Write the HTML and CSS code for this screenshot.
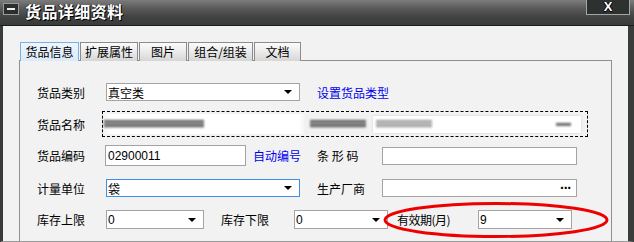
FILE: index.html
```html
<!DOCTYPE html>
<html lang="zh-CN">

<head>
  <meta charset="UTF-8">
  <title>货品详细资料</title>
  <link rel="stylesheet" href="styles.css">
</head>

<body>
  <div class="ventana">
    <div class="titulo">
      <span class="icono-sistema"><span></span></span>
      <span class="titulo-texto">货品详细资料</span>
      <span class="cerrar">X</span>
    </div>

    <div class="cuerpo">
      <div class="pestanas">
        <span class="pestana activa p1">货品信息</span>
        <span class="pestana p2">扩展属性</span>
        <span class="pestana p3">图片</span>
        <span class="pestana p4">组合/组装</span>
        <span class="pestana p5">文档</span>
      </div>

      <div class="panel">
        <div class="fila fila1">
          <span class="etiqueta">货品类别</span>
          <div class="combo ancho">
            <span class="valor">真空类</span>
            <span class="flecha"></span>
          </div>
          <a class="enlace enlace-tipo">设置货品类型</a>
        </div>

        <div class="fila fila2">
          <span class="etiqueta corta">货品名称</span>
          <div class="punteado">
            <div class="campo-borroso">
              <span class="borron b1"></span>
            </div>
            <span class="borron b2"></span>
            <div class="combo-borroso">
              <span class="borron b3"></span>
              <span class="borron flecha-borrosa"></span>
            </div>
          </div>
        </div>

        <div class="fila fila3">
          <span class="etiqueta media">货品编码</span>
          <div class="entrada codigo">
            <span class="valor">02900011</span>
          </div>
          <a class="enlace enlace-auto">自动编号</a>
          <span class="etiqueta derecha">条 形 码</span>
          <div class="entrada derecha-campo"></div>
        </div>

        <div class="fila fila4">
          <span class="etiqueta">计量单位</span>
          <div class="combo ancho enfocado">
            <span class="valor">袋</span>
            <span class="flecha"></span>
          </div>
          <span class="etiqueta derecha">生产厂商</span>
          <div class="entrada derecha-campo">
            <span class="puntos">···</span>
          </div>
        </div>

        <div class="fila fila5">
          <span class="etiqueta">库存上限</span>
          <div class="combo corto">
            <span class="valor">0</span>
            <span class="flecha"></span>
          </div>
          <span class="etiqueta inferior">库存下限</span>
          <div class="combo pequeno">
            <span class="valor">0</span>
            <span class="flecha"></span>
          </div>
          <span class="etiqueta vigencia">有效期(月)</span>
          <div class="combo pequeno">
            <span class="valor">9</span>
            <span class="flecha"></span>
          </div>
        </div>
      </div>
    </div>

    <svg class="marca" width="634" height="242" viewBox="0 0 634 242">
      <ellipse cx="496" cy="220" rx="111" ry="16.5" fill="none" stroke="#ee0000" stroke-width="3" />
    </svg>
  </div>
</body>

</html>
```

FILE: styles.css
```css
body {
  margin: 0;
  font-family: "Liberation Sans", "Noto Sans CJK SC", sans-serif;
  font-size: 12px;
  color: #000;
}

.ventana {
  position: relative;
  width: 634px;
  height: 242px;
  overflow: hidden;
  background: #f2f2f2;
}

/* barra de titulo */
.titulo {
  height: 25px;
  border-bottom: 1px solid #1c1c1c;
  background: linear-gradient(#7c7c7c, #575857 35%, #404241 70%, #383b3a);
  display: flex;
  align-items: center;
}

.icono-sistema {
  width: 14px;
  height: 10px;
  margin: -8px 0 0 3px;
  border: 1px solid #9a9a9a;
  background: #2b2e2d;
  display: flex;
  align-items: center;
  justify-content: center;
}

.icono-sistema span {
  width: 8px;
  height: 2px;
  background: #eee;
}

.titulo-texto {
  margin: -4px 0 0 6px;
  font-family: "Noto Sans CJK SC", sans-serif;
  font-size: 16px;
  font-weight: bold;
  letter-spacing: 0.4px;
  color: #fff;
  text-shadow: 1px 1px 0 #000, -1px 0 0 #222;
}

.cerrar {
  margin: -11px 0 0 auto;
  margin-right: 4px;
  width: 42px;
  height: 14px;
  border: 1px solid #a5a5a5;
  background: #2d3130;
  color: #fff;
  font-weight: bold;
  font-size: 13px;
  line-height: 14px;
  text-align: center;
  text-shadow: 1px 0 0 #000, -1px 0 0 #000, 0 1px 0 #000;
}

/* cuerpo */
.cuerpo {
  height: 215px;
  border-left: 3px solid #3a3a3a;
  border-right: 6px solid #3a3c3b;
  border-bottom: 1px solid #9a9a9a;
  display: flex;
  flex-direction: column;
}

.pestanas {
  display: flex;
  margin: 16px 0 0 17px;
  height: 18px;
  position: relative;
  z-index: 1;
}

.pestana {
  box-sizing: border-box;
  height: 19px;
  margin-right: 1px;
  border: 1px solid #8c8c8c;
  border-bottom: none;
  background: linear-gradient(#fbfbfb, #ececec 45%, #d6d6d6);
  font-family: "Noto Sans CJK SC", sans-serif;
  line-height: 17px;
  text-align: center;
}

.pestana.activa {
  border-color: #7bb0e4;
  background: linear-gradient(#eef6fd, #dbeaf8);
}

.p1 { width: 59px; }
.p2 { width: 58px; }
.p3 { width: 48px; }
.p4 { width: 65px; }
.p5 { width: 47px; }

.panel {
  flex: 1;
  margin-left: 16px;
  width: 593px;
  box-sizing: border-box;
  border: 1px solid #8f8f8f;
  border-bottom: none;
  padding-left: 17px;
  display: flex;
  flex-direction: column;
}

/* filas */
.fila {
  display: flex;
  align-items: center;
}

.fila1 { height: 18px; margin-top: 22px; }
.fila2 { height: 26px; margin-top: 10px; }
.fila3 { height: 21px; margin-top: 8px; }
.fila4 { height: 18px; margin-top: 13px; }
.fila5 { height: 19px; margin-top: 13px; }

.etiqueta {
  width: 69px;
  flex: none;
  font-family: "Noto Sans CJK SC", sans-serif;
  white-space: pre;
}

.etiqueta.corta { width: 65px; }
.etiqueta.media { width: 68px; }
.etiqueta.derecha { width: 65px; margin-left: 17px; }
.etiqueta.inferior { width: 73px; margin-left: 17px; }
.etiqueta.vigencia { width: 81px; margin-left: 9px; letter-spacing: -0.5px; }

.fila3 .etiqueta.derecha { margin-left: 0; }

.combo,
.entrada {
  box-sizing: border-box;
  height: 100%;
  border: 1px solid #a3a3a3;
  background: #fff;
  display: flex;
  align-items: center;
  flex: none;
}

.combo.ancho { width: 194px; }
.combo.corto { width: 98px; }
.combo.pequeno { width: 94px; }
.combo.enfocado { border-color: #3d8ee6; }

.valor {
  padding-left: 1px;
  font-family: "Liberation Sans", "Noto Sans CJK SC", sans-serif;
}

.flecha {
  margin-left: auto;
  margin-right: 7px;
  width: 0;
  height: 0;
  border-left: 4px solid transparent;
  border-right: 4px solid transparent;
  border-top: 4px solid #000;
}

.entrada.codigo { width: 141px; }
.entrada.codigo .valor { padding-left: 2px; }

.entrada.derecha-campo {
  width: 195px;
  height: 18px;
}

.puntos {
  margin-left: auto;
  margin-right: 5px;
  font-weight: bold;
  font-size: 14px;
  letter-spacing: -1px;
  line-height: 10px;
}

.enlace {
  color: #0000ee;
  font-family: "Noto Sans CJK SC", sans-serif;
  cursor: pointer;
}

.enlace-tipo { margin-left: 17px; }
.enlace-auto { margin-left: 7px; width: 64px; }

/* nombre borroso */
.punteado {
  box-sizing: border-box;
  width: 486px;
  height: 26px;
  border: 1px dashed #000;
  display: flex;
  align-items: center;
  padding-left: 1px;
}

.campo-borroso {
  width: 203px;
  height: 20px;
  background: linear-gradient(90deg, #f4f4f4, #fff 8px, #fff 195px, #eee);
  display: flex;
  align-items: center;
}

.borron {
  display: block;
  height: 8px;
  background: repeating-linear-gradient(#222 0 1px, #8a8a8a 1px 2px, #444 2px 3px, #bbb 3px 4px);
  filter: blur(0.8px);
  opacity: 0.85;
}

.b1 { width: 100px; }
.b2 { width: 56px; margin-left: 3px; }

.combo-borroso {
  margin-left: 7px;
  width: 208px;
  height: 17px;
  background: #fff;
  box-shadow: 0 0 2px #ccc;
  display: flex;
  align-items: center;
}

.b3 { width: 56px; margin-left: 3px; opacity: 0.5; }

.flecha-borrosa {
  width: 15px;
  height: 3px;
  margin-left: auto;
  margin-right: 10px;
}

/* marca roja encima */
.marca {
  position: absolute;
  left: 0;
  top: 0;
  pointer-events: none;
}
```
